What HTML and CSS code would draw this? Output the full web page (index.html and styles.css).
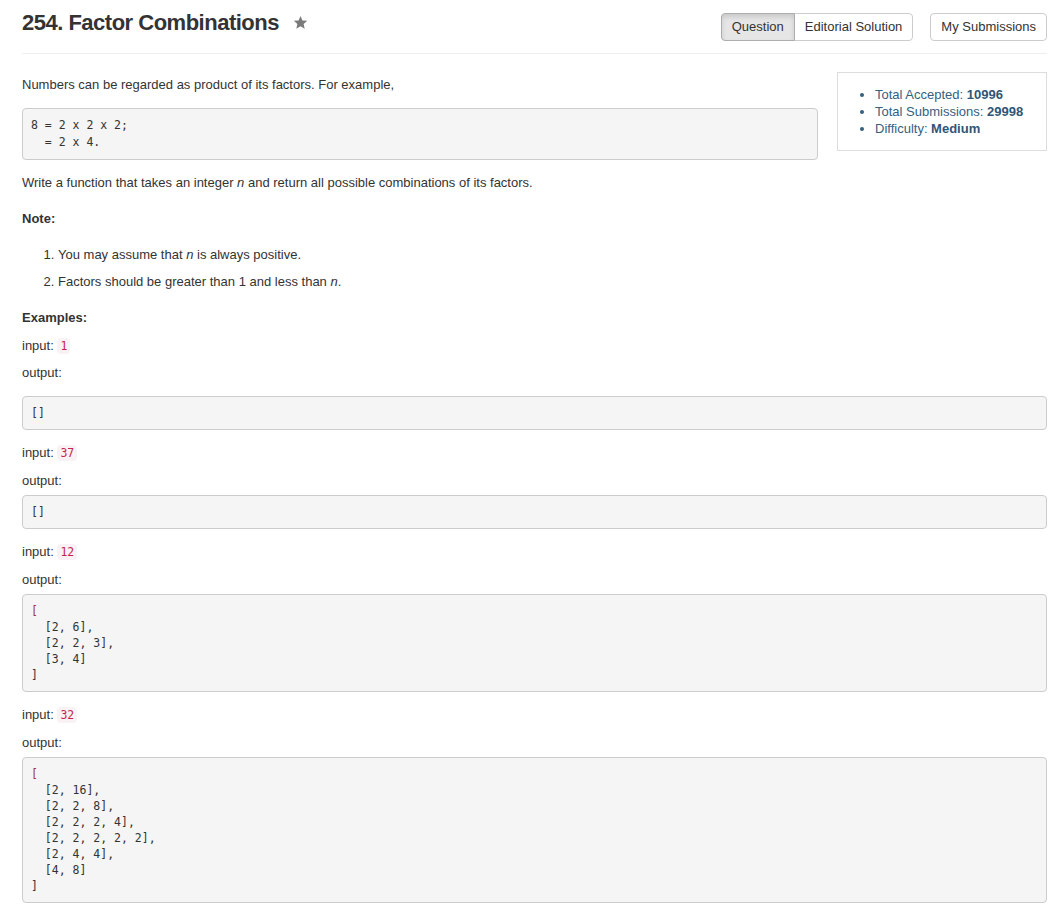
FILE: index.html
```html
<!DOCTYPE html>
<html lang="en">
<head>
<meta charset="utf-8">
<title>254. Factor Combinations</title>
<link rel="stylesheet" href="styles.css">
</head>
<body>
<div class="page">
  <header class="header">
    <h3 class="title">254. Factor Combinations
      <svg class="star" viewBox="0 0 24 24" width="15" height="15" aria-hidden="true"><path d="M12 1.5l3.1 7.1 7.7.7-5.8 5.1 1.7 7.6L12 18l-6.7 4 1.7-7.6L1.2 9.3l7.7-.7z"/></svg>
    </h3>
    <div class="actions">
      <div class="btn-group">
        <a class="btn active">Question</a>
        <a class="btn">Editorial Solution</a>
      </div>
      <a class="btn single">My Submissions</a>
    </div>
  </header>

  <main class="content">
    <div class="info">
      <ul>
        <li>Total Accepted: <strong>10996</strong></li>
        <li>Total Submissions: <strong>29998</strong></li>
        <li>Difficulty: <strong>Medium</strong></li>
      </ul>
    </div>

    <p>Numbers can be regarded as product of its factors. For example,</p>
<pre class="code plain">8 = 2 x 2 x 2;
  = 2 x 4.</pre>
    <p>Write a function that takes an integer <em>n</em> and return all possible combinations of its factors.</p>
    <p class="note"><strong>Note:</strong></p>
    <ol class="notes">
      <li>You may assume that <em>n</em> is always positive.</li>
      <li>Factors should be greater than 1 and less than <em>n</em>.</li>
    </ol>
    <p><strong>Examples:</strong></p>
    <p class="first-input">input: <code>1</code></p>
    <p>output:</p>
<pre class="code"><span class="pun">[]</span></pre>
    <p>input: <code>37</code></p>
    <p class="tight">output:</p>
<pre class="code"><span class="pun">[]</span></pre>
    <p>input: <code>12</code></p>
    <p class="tight">output:</p>
<pre class="code"><span class="open">[</span>
  [2, 6],
  [2, 2, 3],
  [3, 4]
]</pre>
    <p>input: <code>32</code></p>
    <p class="tight">output:</p>
<pre class="code"><span class="open">[</span>
  [2, 16],
  [2, 2, 8],
  [2, 2, 2, 4],
  [2, 2, 2, 2, 2],
  [2, 4, 4],
  [4, 8]
]</pre>
  </main>
</div>
</body>
</html>
```
FILE: styles.css
```css
html, body {
  margin: 0;
  padding: 0;
  background: #fff;
}

body {
  font-family: "Liberation Sans", Arial, Helvetica, sans-serif;
  font-size: 13px;
  line-height: 18px;
  color: #333;
}

.page {
  padding: 0 15px 0 22px;
}

.header {
  display: flex;
  justify-content: space-between;
  align-items: flex-start;
  padding: 11px 0 12px;
  border-bottom: 1px solid #eee;
}

.title {
  margin: 0;
  display: flex;
  align-items: center;
  gap: 14px;
  font-size: 22px;
  line-height: 24px;
  font-weight: bold;
  letter-spacing: -0.5px;
  color: #333;
}

.star {
  fill: #7b7b7b;
  margin-top: -1px;
}

.actions {
  display: flex;
  gap: 17px;
  margin-top: 2px;
}

.btn-group {
  display: flex;
}

.btn {
  display: block;
  font-size: 13px;
  line-height: 18px;
  padding: 4px 10px;
  border: 1px solid #ccc;
  background: #fff;
  color: #333;
  cursor: pointer;
}

.btn-group .btn:first-child {
  border-radius: 4px 0 0 4px;
}

.btn-group .btn:last-child {
  border-radius: 0 4px 4px 0;
  margin-left: -1px;
}

.btn.single {
  border-radius: 4px;
}

.btn.active {
  background: #e6e6e6;
  border-color: #adadad;
  box-shadow: inset 0 3px 5px rgba(0, 0, 0, 0.125);
  position: relative;
  z-index: 1;
}

.content {
  padding-top: 22px;
}

.info {
  float: right;
  width: 210px;
  box-sizing: border-box;
  margin: -4px 0 10px 19px;
  border: 1px solid #ddd;
  padding: 13px 0;
  color: #36607f;
}

.info ul {
  margin: 0;
  padding-left: 37px;
  line-height: 17px;
}

.info strong {
  color: #2f5675;
}

p {
  margin: 0 0 10px;
}

p.note {
  margin-top: 18px;
}

p.first-input {
  margin-bottom: 9px;
}

p.tight {
  margin-bottom: 5px;
}

.notes {
  margin: 18px 0 18px;
  padding-left: 36px;
}

.notes li {
  margin-bottom: 9px;
}

code {
  font-family: "DejaVu Sans Mono", Menlo, monospace;
  font-size: 11.5px;
  padding: 1px 3px;
  color: #c7254e;
  background: #f9f2f4;
  border-radius: 4px;
}

pre.code {
  overflow: auto;
  margin: 14px 0;
  padding: 8px;
  font-family: "DejaVu Sans Mono", Menlo, monospace;
  font-size: 11.5px;
  line-height: 16px;
  color: #333;
  background: #f5f5f5;
  border: 1px solid #ccc;
  border-radius: 4px;
}

pre.code.plain {
  line-height: 17px;
}

p.tight + pre.code {
  margin-top: 5px;
}

.open {
  color: #a23a2c;
}
```
